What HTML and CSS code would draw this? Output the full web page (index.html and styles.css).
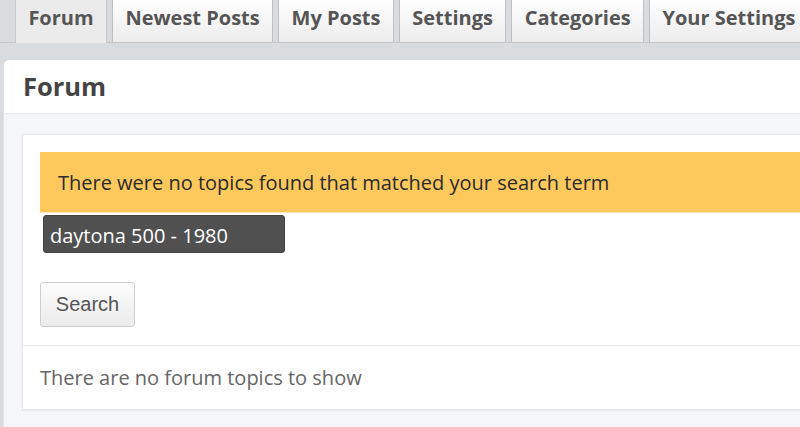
FILE: index.html
```html
<!DOCTYPE html>
<html>
<head>
<meta charset="utf-8">
<link rel="stylesheet" href="styles.css">
</head>
<body>
<nav class="tabs">
  <a class="tab active">Forum</a>
  <a class="tab">Newest Posts</a>
  <a class="tab">My Posts</a>
  <a class="tab">Settings</a>
  <a class="tab">Categories</a>
  <a class="tab">Your Settings</a>
</nav>
<section class="panel">
  <header class="panel-head"><h1>Forum</h1></header>
  <div class="panel-body">
    <div class="card">
      <div class="card-main">
        <div class="alert">There were no topics found that matched your search term</div>
        <div class="term">daytona 500 - 1980</div>
        <button class="btn">Search</button>
      </div>
      <div class="card-foot">There are no forum topics to show</div>
    </div>
  </div>
</section>
</body>
</html>
```
FILE: styles.css
```css
html, body {
  margin: 0;
  padding: 0;
  background: #d9dcdf;
  font-family: "Open Sans", "Liberation Sans", sans-serif;
  overflow: hidden;
  height: 427px;
}
.tabs {
  display: flex;
  gap: 5px;
  height: 42px;
  padding-left: 15px;
  border-bottom: 1px solid #c4c7ca;
  white-space: nowrap;
}
.tab {
  display: flex;
  align-items: center;
  padding: 0 12.4px 7px 12.4px;
  height: 42px;
  box-sizing: border-box;
  font-weight: 700;
  font-size: 20px;
  color: #555;
  background: linear-gradient(#ffffff, #ececec);
  border: 1px solid #bfbfbf;
  border-top: none;
  border-bottom: none;
  flex-shrink: 0;
}
.tab.active {
  background: #ebebeb;
  height: 43px;
  padding-bottom: 8px;
  border-color: #c8c8c8;
}
.panel {
  margin: 17px 0 0 3px;
  background: #f5f6fa;
  border-radius: 6px 0 0 0;
  border-left: 1px solid #e2e3e6;
  height: 400px;
}
.panel-head {
  background: #fff;
  border-radius: 6px 0 0 0;
  height: 53px;
  border-bottom: 1px solid #e8e9ec;
  display: flex;
  align-items: center;
  padding-left: 19px;
}
.panel-head h1 {
  margin: 0;
  font-size: 25.5px;
  font-weight: 700;
  color: #444;
  padding-bottom: 2px;
}
.panel-body {
  padding: 20px 0 0 18px;
}
.card {
  background: #fff;
  border: 1px solid #e4e5e8;
  border-right: none;
  box-shadow: 0 1px 2px rgba(0,0,0,0.06);
  height: 274px;
}
.card-main {
  padding: 17px 0 18px 17px;
  border-bottom: 1px solid #ebebeb;
}
.alert {
  background: #fec95c;
  height: 61px;
  display: flex;
  align-items: center;
  padding-left: 18px;
  font-size: 20px;
  color: #2b2b2b;
  border-bottom: 1px solid #f5e2bc;
  box-sizing: border-box;
}
.term {
  margin: 2px 0 0 3px;
  width: 242px;
  height: 38px;
  box-sizing: border-box;
  background: #505050;
  border: 1px solid #444;
  border-radius: 3px;
  color: #fff;
  font-size: 20px;
  padding: 2px 0 0 6px;
  display: flex;
  align-items: center;
}
.btn {
  display: block;
  margin-top: 29px;
  width: 95px;
  height: 45px;
  font-family: "Liberation Sans", Arial, sans-serif;
  font-size: 20px;
  color: #555;
  background: linear-gradient(#fcfcfc, #ececec);
  border: 1px solid #cfcfcf;
  border-radius: 3px;
  padding: 0;
}
.card-foot {
  height: 62px;
  display: flex;
  align-items: center;
  padding-left: 17px;
  font-size: 20px;
  color: #666;
}
```
